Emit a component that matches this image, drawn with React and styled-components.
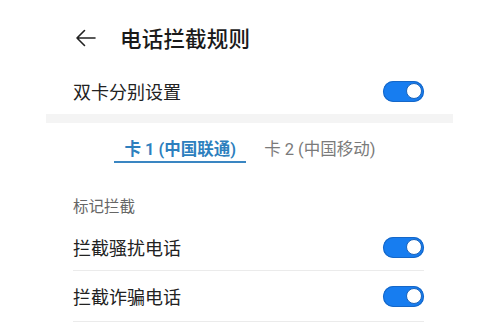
import React from "react";
import styled, { createGlobalStyle } from "styled-components";

const Global = createGlobalStyle`
  html, body { margin: 0; padding: 0; background: #fff; }
  body { font-family: "Noto Sans CJK SC", "Noto Sans", sans-serif; }
`;

const Page = styled.div`
  width: 500px;
  height: 325px;
  overflow: hidden;
  background: #fff;
  display: flex;
  flex-direction: column;
`;

const Header = styled.div`
  height: 76px;
  display: flex;
  align-items: center;
  padding-left: 75px;
  gap: 24px;
`;

const BackIcon = styled.svg`
  width: 21px;
  height: 18px;
  display: block;
`;

const Title = styled.div`
  font-size: 21.5px;
  font-weight: 500;
  color: #1a1a1a;
  line-height: 28px;
  letter-spacing: 0.2px;
`;

const Row = styled.div`
  display: flex;
  align-items: center;
  justify-content: space-between;
  height: ${(p) => p.$h || 46}px;
  margin: 0 76px 0 73px;
  border-bottom: ${(p) => (p.$divider ? "1px solid #ebebeb" : "none")};
`;

const RowText = styled.div`
  font-size: 18px;
  color: #222;
  line-height: 24px;
`;

const Toggle = styled.div`
  position: relative;
  width: 41px;
  height: 21px;
  border-radius: 11px;
  background: #177df0;
  box-shadow: inset 0 0 0 1px #1667c7;
  flex-shrink: 0;
`;

const Knob = styled.div`
  position: absolute;
  top: 2px;
  right: 2px;
  width: 14px;
  height: 14px;
  border-radius: 50%;
  background: #fff;
  border: 1.5px solid #1a63ba;
`;

const Band = styled.div`
  margin: 8px 47px 0 46px;
  height: 9px;
  background: #f4f4f4;
`;

const Tabs = styled.div`
  display: flex;
  justify-content: center;
  gap: 8px;
  padding-top: 17px;
`;

const Tab = styled.div`
  padding: 0 10px 1px;
  font-family: "Roboto", "Noto Sans CJK SC", sans-serif;
  font-size: 16.5px;
  line-height: 20px;
  font-weight: ${(p) => (p.$active ? 600 : 400)};
  color: ${(p) => (p.$active ? "#2d7fbe" : "#7a7a7a")};
  border-bottom: 2px solid ${(p) => (p.$active ? "#3a86c2" : "transparent")};
  white-space: nowrap;
`;

const SectionLabel = styled.div`
  margin: 32px 0 0 73px;
  font-size: 15.5px;
  line-height: 20px;
  color: #666;
`;

const Spacer = styled.div`
  height: 9px;
`;

function Switch() {
  return (
    <Toggle>
      <Knob />
    </Toggle>
  );
}

export default function App() {
  return (
    <Page>
      <Global />
      <Header>
        <BackIcon viewBox="0 0 21 18">
          <path
            d="M20 9H2M9.5 1.5L2 9l7.5 7.5"
            fill="none"
            stroke="#222"
            strokeWidth="1.6"
            strokeLinecap="round"
            strokeLinejoin="round"
          />
        </BackIcon>
        <Title>电话拦截规则</Title>
      </Header>
      <Row $h={30}>
        <RowText>双卡分别设置</RowText>
        <Switch />
      </Row>
      <Band />
      <Tabs>
        <Tab $active>卡 1 (中国联通)</Tab>
        <Tab>卡 2 (中国移动)</Tab>
      </Tabs>
      <SectionLabel>标记拦截</SectionLabel>
      <Spacer />
      <Row $h={46} $divider>
        <RowText>拦截骚扰电话</RowText>
        <Switch />
      </Row>
      <Row $h={50} $divider>
        <RowText>拦截诈骗电话</RowText>
        <Switch />
      </Row>
    </Page>
  );
}
